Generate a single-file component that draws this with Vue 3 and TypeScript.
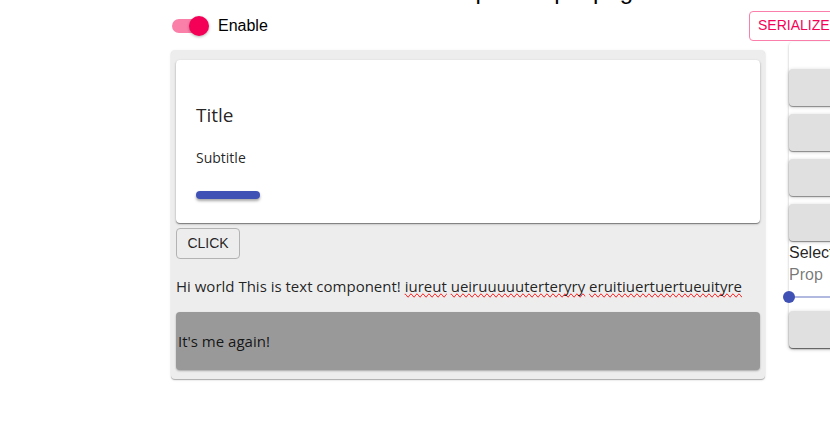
<script setup lang="ts">
import { ref } from 'vue'

interface Word {
  text: string
  misspelled?: boolean
}

const enabled = ref(true)
const fontSize = ref(0)
const toolbox = ['button', 'text', 'container', 'card']
const words: Word[] = [
  { text: 'Hi world This is text component!' },
  { text: 'iureut', misspelled: true },
  { text: 'ueiruuuuuterteryry', misspelled: true },
  { text: 'eruitiuertuertueuityre', misspelled: true },
]
</script>

<template>
  <div class="viewport">
    <main class="page">
      <h1 class="heading">A super simple page editor</h1>

      <header class="topbar">
        <label class="switch">
          <input v-model="enabled" class="switch-input" type="checkbox" />
          <span class="switch-track"><span class="switch-thumb"></span></span>
          <span>Enable</span>
        </label>
        <button class="outlined serialize" type="button">SERIALIZE</button>
      </header>

      <div class="columns">
        <section class="canvas">
          <article class="card">
            <h2 class="card-title">Title</h2>
            <p class="card-subtitle">Subtitle</p>
            <button class="card-action" type="button"></button>
          </article>
          <button class="outlined click" type="button">CLICK</button>
          <p class="text">
            <template v-for="(word, i) in words" :key="i">
              <span :class="{ misspelled: word.misspelled }">{{ word.text }}</span>{{ ' ' }}
            </template>
          </p>
          <div class="container">
            <p class="text">It's me again!</p>
          </div>
        </section>

        <aside class="panel">
          <div class="toolbox">
            <button v-for="tool in toolbox" :key="tool" class="raised" type="button"></button>
          </div>
          <div class="selected">Selected</div>
          <label class="prop" for="prop-slider">Prop</label>
          <input id="prop-slider" v-model.number="fontSize" class="slider" type="range" min="0" max="100" />
          <button class="raised" type="button"></button>
        </aside>
      </div>
    </main>
  </div>
</template>

<style>
body {
  background: #fff;
}
</style>

<style scoped>
.viewport {
  display: flow-root;
  overflow: hidden;
  font: 16px/22px "Liberation Sans", Arial, sans-serif;
  color: rgba(0, 0, 0, 0.87);
}

.page {
  margin: -25px -141px 0 171px;
  padding-bottom: 24px;
}

.heading {
  margin: 0;
  font-size: 24px;
  font-weight: 400;
  line-height: 32px;
  text-align: center;
  color: #000;
}

button {
  box-sizing: border-box;
  margin: 0;
  border: 0;
  border-radius: 4px;
  font: inherit;
  cursor: pointer;
}

.topbar {
  display: grid;
  grid-template-columns: minmax(0, 1fr) 222px;
  align-items: center;
  padding-top: 4px;
}

.switch {
  display: flex;
  align-items: center;
  gap: 9px;
  color: #000;
}

.switch-input {
  position: absolute;
  opacity: 0;
}

.switch-track {
  display: flex;
  align-items: center;
  width: 34px;
  height: 14px;
  margin: 0 3px 0 1px;
  border-radius: 7px;
  background: #9e9e9e;
}

.switch-thumb {
  flex: none;
  width: 20px;
  height: 20px;
  border-radius: 50%;
  background: #fafafa;
  box-shadow: 0 1px 3px rgba(0, 0, 0, 0.3);
}

.switch-input:checked + .switch-track {
  justify-content: flex-end;
  background: #fa80a9;
}

.switch-input:checked + .switch-track .switch-thumb {
  margin-right: -3px;
  background: #f50057;
}

.outlined {
  height: 31px;
  border: 1px solid #b3b3b3;
  background: transparent;
  color: rgba(0, 0, 0, 0.87);
  font-size: 14px;
  line-height: 20px;
}

.serialize {
  height: 30px;
  padding: 0 8px 2px;
  border-color: #fa80ab;
  color: #f50057;
  text-align: left;
}

.columns {
  display: grid;
  grid-template-columns: minmax(0, 1fr) 182px;
  gap: 24px;
  align-items: start;
  margin-top: 1px;
}

.canvas {
  margin-top: 8px;
  padding: 10px 5px 9px;
  border-radius: 4px;
  background: #ededed;
  box-shadow: 0 1px 1px rgba(0, 0, 0, 0.28), 0 1px 3px rgba(0, 0, 0, 0.1);
}

.card {
  padding: 43px 20px 24px;
  border-radius: 4px;
  background: #fff;
  box-shadow: 0 1px 1px rgba(0, 0, 0, 0.4), 0 1px 3px rgba(0, 0, 0, 0.2);
  font-family: "Open Sans", "Noto Sans", sans-serif;
}

.card-title {
  margin: 0;
  font-size: 19px;
  font-weight: 400;
  line-height: 24px;
}

.card-subtitle {
  margin: 20px 0 23px;
  font-size: 14px;
  line-height: 21px;
}

.card-action {
  display: block;
  width: 64px;
  height: 8px;
  background: #3f51b5;
  box-shadow: 0 2px 3px rgba(0, 0, 0, 0.35);
}

.click {
  display: block;
  width: 64px;
  margin-top: 5px;
  padding: 0 0 2px;
}

.text {
  margin: 16px 0;
  font: 15px/22px "Open Sans", "Noto Sans", sans-serif;
}

.misspelled {
  text-decoration: spelling-error;
}

.container {
  display: flow-root;
  margin-top: -1px;
  padding: 2px;
  border-radius: 4px;
  background: #999;
  box-shadow: 0 1px 2px rgba(0, 0, 0, 0.3);
}

.panel {
  padding-top: 27px;
  border-radius: 4px;
  background: #fff;
  box-shadow: 0 1px 1px rgba(0, 0, 0, 0.2), 0 1px 3px rgba(0, 0, 0, 0.2);
}

.toolbox {
  display: grid;
  gap: 8px;
}

.raised {
  display: block;
  width: 100%;
  height: 37px;
  background: #e0e0e0;
  box-shadow: 0 1px 1px rgba(0, 0, 0, 0.4), 0 1px 4px rgba(0, 0, 0, 0.2);
}

.selected {
  margin-top: 1px;
}

.prop {
  display: block;
  color: rgba(0, 0, 0, 0.54);
}

.slider {
  appearance: none;
  display: block;
  width: 100%;
  height: 12px;
  margin: 5px 0 8px -6px;
  background: linear-gradient(#b2b9e1, #b2b9e1) 6px 5px / 100% 2px no-repeat;
}

.slider::-webkit-slider-thumb {
  appearance: none;
  width: 12px;
  height: 12px;
  border-radius: 50%;
  background: #3f51b5;
}
</style>
